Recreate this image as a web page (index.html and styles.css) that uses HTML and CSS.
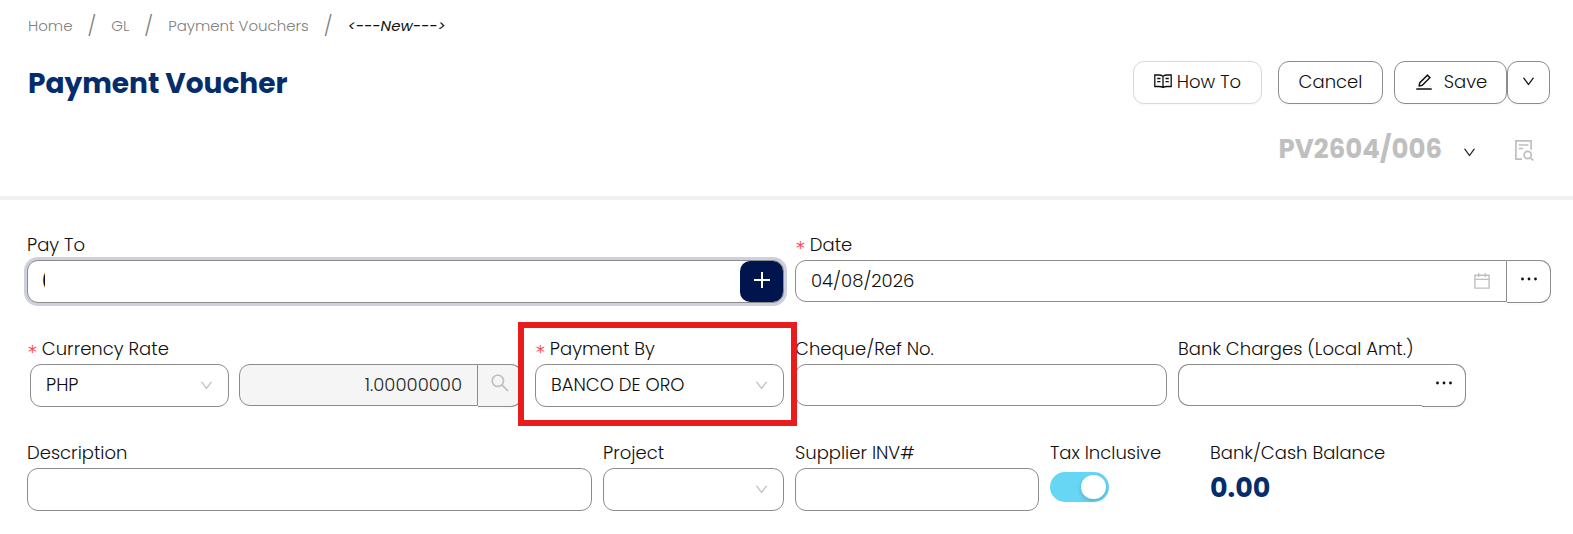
FILE: index.html
```html
<!DOCTYPE html>
<html lang="en">
<head>
<meta charset="utf-8">
<title>Payment Voucher</title>
<meta name="viewport" content="width=device-width, initial-scale=1">
<link rel="stylesheet" href="styles.css">
</head>
<body>
<svg class="sprite" aria-hidden="true">
  <symbol id="down" viewBox="0 0 1024 1024"><path d="M884 256h-75c-5.100 0-9.900 2.500-12.900 6.600L512 654.200 227.900 262.600c-3-4.100-7.800-6.600-12.900-6.600h-75c-6.500 0-10.300 7.400-6.500 12.700l352.600 486.100c12.800 17.600 39 17.600 51.700 0l352.600-486.100c3.900-5.300.1-12.700-6.400-12.700z"/></symbol>
  <symbol id="search" viewBox="0 0 1024 1024"><path d="M909.600 854.500L649.900 594.800C690.200 542.700 712 479 712 412c0-80.200-31.300-155.400-87.900-212.100-56.600-56.700-132-87.900-212.100-87.900s-155.500 31.300-212.100 87.900C143.200 256.500 112 331.800 112 412c0 80.100 31.300 155.500 87.900 212.100C256.500 680.800 331.800 712 412 712c67 0 130.600-21.800 182.700-62l259.700 259.600a8.200 8.200 0 0011.600 0l43.600-43.500a8.200 8.200 0 000-11.600zM570.400 570.400C528 612.700 471.800 636 412 636s-116-23.300-158.400-65.600C211.300 528 188 471.800 188 412s23.300-116.100 65.600-158.400C296 211.300 352.200 188 412 188s116.100 23.200 158.400 65.600S636 352.200 636 412s-23.300 116.100-65.600 158.400z"/></symbol>
  <symbol id="calendar" viewBox="0 0 1024 1024"><path d="M880 184H712v-64c0-4.400-3.600-8-8-8h-56c-4.400 0-8 3.600-8 8v64H384v-64c0-4.400-3.600-8-8-8h-56c-4.400 0-8 3.600-8 8v64H144c-17.700 0-32 14.300-32 32v664c0 17.700 14.300 32 32 32h736c17.700 0 32-14.300 32-32V216c0-17.700-14.300-32-32-32zm-40 656H184V460h656v380zM184 392V256h128v48c0 4.400 3.600 8 8 8h56c4.400 0 8-3.600 8-8v-48h256v48c0 4.400 3.600 8 8 8h56c4.400 0 8-3.600 8-8v-48h128v136H184z"/></symbol>
  <symbol id="edit" viewBox="0 0 1024 1024"><path d="M257.700 752c2 0 4-.2 6-.5L431.900 722c2-.4 3.900-1.300 5.300-2.800l423.900-423.900a9.960 9.960 0 000-14.100L694.900 114.900c-1.900-1.900-4.400-2.900-7.100-2.900s-5.200 1-7.100 2.900L256.800 538.800c-1.500 1.500-2.400 3.300-2.800 5.300l-29.500 168.200a33.500 33.500 0 009.400 29.800c6.600 6.400 14.900 9.900 23.800 9.900zm67.400-174.400L687.800 215l73.300 73.300-362.700 362.600-88.900 15.700 15.600-89zM880 836H144c-17.700 0-32 14.300-32 32v36c0 4.400 3.600 8 8 8h784c4.400 0 8-3.600 8-8v-36c0-17.700-14.300-32-32-32z"/></symbol>
  <symbol id="book" viewBox="0 0 18 18"><g fill="none" stroke="currentColor" stroke-width="1.300"><path d="M9 3.200C7.800 2.400 6.500 2 5 2H.8v11.500H5c1.500 0 2.800.3 4 1 1.200-.7 2.500-1 4-1h4.200V2H13c-1.500 0-2.800.4-4 1.200zM9 3v11.500M3.200 5.500h3.300M3.200 8.700h3.300M11.500 5.500h3.300M11.500 8.700h3.300"/></g></symbol>
  <symbol id="filesearch" viewBox="0 0 20 22"><g fill="none" stroke="currentColor" stroke-width="1.700"><path d="M8 20.200H1.900V1.800h15.200v9M4.600 6h9.800M4.600 9.500h4.600"/><circle cx="13.700" cy="16" r="3.600"/><path d="M16.200 18.600l3 2.700"/></g></symbol>
  <symbol id="dots" viewBox="0 0 18 18"><circle cx="2.500" cy="9" r="1.400"/><circle cx="9" cy="9" r="1.400"/><circle cx="15.500" cy="9" r="1.400"/></symbol>
  <symbol id="plus" viewBox="0 0 18 18"><path d="M8 1h2v7h7v2h-7v7H8v-7H1V8h7z"/></symbol>
</svg>

<header class="page-head">
  <nav class="crumbs" aria-label="Breadcrumb">
    <a href="#">Home</a><span class="sep">/</span><a href="#">GL</a><span class="sep">/</span><a href="#">Payment Vouchers</a><span class="sep">/</span><em>&lt;---New---&gt;</em>
  </nav>
  <div class="title-row">
    <h1>Payment Voucher</h1>
    <div class="actions">
      <button class="btn btn-soft" type="button"><svg class="icon"><use href="#book"/></svg>How To</button>
      <button class="btn btn-cancel" type="button">Cancel</button>
      <div class="split">
        <button class="btn btn-save" type="button"><svg class="icon-lg"><use href="#edit"/></svg>Save</button>
        <button class="btn btn-more" type="button" aria-label="More save options"><svg class="chev"><use href="#down"/></svg></button>
      </div>
    </div>
  </div>
  <div class="number-row">
    <strong>PV2604/006</strong>
    <button class="plain" type="button" aria-label="Voucher numbers"><svg class="chev"><use href="#down"/></svg></button>
    <button class="plain plain-muted" type="button" aria-label="Preview"><svg class="file"><use href="#filesearch"/></svg></button>
  </div>
</header>

<form class="voucher">
  <div class="row row-payee">
    <div class="field">
      <label for="payto">Pay To</label>
      <div class="box focused">
        <input class="clipped" id="payto" type="text" value="(">
        <button class="add" type="button" aria-label="Add payee"><svg class="icon"><use href="#plus"/></svg></button>
      </div>
    </div>
    <div class="field">
      <label class="required" for="date">Date</label>
      <div class="group">
        <div class="box joined">
          <input id="date" type="text" value="04/08/2026">
          <svg class="icon-lg muted"><use href="#calendar"/></svg>
        </div>
        <button class="addon" type="button" aria-label="Date options"><svg class="icon"><use href="#dots"/></svg></button>
      </div>
    </div>
  </div>

  <div class="row row-bank">
    <div class="field">
      <label class="required" for="currency">Currency Rate</label>
      <div class="currency">
        <div class="box">
          <select id="currency"><option>PHP</option></select>
          <svg class="chev muted"><use href="#down"/></svg>
        </div>
        <div class="group">
          <div class="box joined disabled"><input class="amount" type="text" value="1.00000000" aria-label="Rate" disabled></div>
          <button class="addon disabled" type="button" aria-label="Look up rate" disabled><svg class="lens"><use href="#search"/></svg></button>
        </div>
      </div>
    </div>
    <div class="field highlighted">
      <label class="required" for="payby">Payment By</label>
      <div class="box">
        <select id="payby"><option>BANCO DE ORO</option></select>
        <svg class="chev muted"><use href="#down"/></svg>
      </div>
    </div>
    <div class="field">
      <label for="cheque">Cheque/Ref No.</label>
      <div class="box short"><input id="cheque" type="text"></div>
    </div>
    <div class="field">
      <label for="charges">Bank Charges (Local Amt.)</label>
      <div class="group">
        <div class="box joined open"><input id="charges" type="text"></div>
        <button class="addon" type="button" aria-label="Bank charge options"><svg class="icon"><use href="#dots"/></svg></button>
      </div>
    </div>
  </div>

  <div class="row row-detail">
    <div class="field">
      <label for="desc">Description</label>
      <div class="box"><input id="desc" type="text"></div>
    </div>
    <div class="field">
      <label for="project">Project</label>
      <div class="box">
        <select id="project"><option></option></select>
        <svg class="chev muted"><use href="#down"/></svg>
      </div>
    </div>
    <div class="field">
      <label for="inv">Supplier INV#</label>
      <div class="box"><input id="inv" type="text"></div>
    </div>
    <div class="field">
      <label for="tax">Tax Inclusive</label>
      <input class="switch" id="tax" type="checkbox" role="switch" checked>
    </div>
    <div class="field">
      <label for="balance">Bank/Cash Balance</label>
      <output class="balance" id="balance">0.00</output>
    </div>
  </div>
</form>
</body>
</html>
```

FILE: styles.css
```css
* { box-sizing: border-box; }

body {
  margin: 0;
  background: #fff;
  color: #0f0f0f;
  font-family: Poppins, Inter, "Open Sans", sans-serif;
  font-size: 18px;
  font-weight: 300;
  line-height: 26px;
}

button, input, select { font: inherit; color: inherit; }
button { cursor: pointer; }
svg { display: block; flex: none; fill: currentColor; }

.sprite { position: absolute; width: 0; height: 0; }
.icon { width: 18px; height: 18px; }
.icon-lg { width: 20px; height: 20px; }
.chev { width: 15px; height: 15px; }
.lens { width: 22px; height: 22px; }
.file { width: 20px; height: 22px; }
.muted { color: #bfbfbf; }

/* Page header */
.page-head {
  padding: 13px 23px 30px 28px;
  border-bottom: 4px solid #f0f0f0;
}

.crumbs {
  display: flex;
  align-items: center;
  color: #808080;
  font-size: 15px;
}
.crumbs a { color: inherit; text-decoration: none; }
.crumbs em { color: #0f0f0f; font-weight: 400; }
.sep { padding: 0 15px; font-size: 20px; }

.title-row {
  display: flex;
  justify-content: space-between;
  align-items: center;
  padding-top: 22px;
}
h1 {
  margin: 0;
  padding-top: 2px;
  color: #062d6b;
  font-size: 28px;
  font-weight: 700;
  line-height: 40px;
}

.actions { display: flex; }
.btn {
  display: flex;
  align-items: center;
  justify-content: center;
  height: 43px;
  padding: 0 0 2px;
  border: 1px solid #8c8c8c;
  border-radius: 11px;
  background: #fff;
  box-shadow: 0 2px 0 rgba(0, 0, 0, 0.02);
}
.btn-soft { min-width: 129px; margin-right: 16px; gap: 5px; border-color: #d9d9d9; }
.btn-cancel { min-width: 105px; margin-right: 11px; }
.btn-save { min-width: 113px; gap: 10px; }
.btn-more { min-width: 43px; }
.split { display: flex; }

.number-row {
  display: flex;
  justify-content: flex-end;
  align-items: center;
  padding: 28px 16px 0 0;
  color: #bfbfbf;
}
.number-row strong { font-size: 26px; font-weight: 700; line-height: 34px; }
.plain {
  margin-left: 20px;
  padding: 6px 0 0;
  border: 0;
  background: none;
  color: #262626;
}
.plain-muted { margin-left: 37px; padding-top: 2px; color: #bfbfbf; }

/* Form */
.voucher {
  display: grid;
  row-gap: 33px;
  padding: 32px 22px 24px 27px;
}
.row { display: grid; column-gap: 11px; }
.row-payee { grid-template-columns: 757fr 756fr; }
.row-bank { grid-template-columns: 497fr 249fr 372fr 288fr 74fr; }
.row-detail { grid-template-columns: 565fr 181fr 244fr 149fr 341fr; }

.field { position: relative; min-width: 0; }
.field label { display: block; margin-bottom: 2px; white-space: nowrap; }
.required::before {
  content: "\2217";
  margin-right: 4px;
  color: #ff4d4f;
  font-family: "DejaVu Sans Mono", monospace;
  font-size: 18px;
  line-height: 0;
}

.box {
  display: flex;
  align-items: center;
  position: relative;
  flex: 1;
  min-width: 0;
  height: 43px;
  border: 1px solid #8c8c8c;
  border-radius: 11px;
  background: #fff;
}
.box input, .box select {
  flex: 1;
  width: 100%;
  min-width: 0;
  height: 100%;
  padding: 0 15px 2px;
  border: 0;
  outline: 0;
  background: none;
  appearance: none;
}
.box > .muted { position: absolute; right: 14px; pointer-events: none; }
.box .amount { text-align: right; color: #262626; }
.box .clipped { padding-left: 13px; padding-right: calc(100% - 60px); font-weight: 500; }
.short { height: 42px; }

.focused { box-shadow: 0 0 0 3px #cdd0de; }
.add {
  display: grid;
  place-items: center;
  width: 43px;
  height: 41px;
  padding: 0 0 4px;
  border: 0;
  border-radius: 10px;
  background: #00154d;
  color: #fff;
}

.group { display: flex; min-width: 0; }
.joined { height: 42px; border-radius: 11px 0 0 11px; }
.open { border-right: 0; }
.open + .addon { border-left: 0; }
.addon {
  display: grid;
  place-items: center;
  width: 44px;
  height: 43px;
  padding: 0 0 6px;
  border: 1px solid #8c8c8c;
  border-left: 0;
  border-radius: 0 11px 11px 0;
  background: #fff;
  box-shadow: 0 2px 0 rgba(0, 0, 0, 0.02);
}
.disabled { background: #f5f5f5; color: #bfbfbf; }

.currency {
  display: grid;
  grid-template-columns: 199fr 283fr;
  column-gap: 10px;
  padding: 0 2px 0 3px;
}

/* Callout frame drawn over the neighbouring fields */
.highlighted { z-index: 1; }
.highlighted::after {
  content: "";
  position: absolute;
  inset: -14px -13px -19px -17px;
  border: 6px solid #e81c1c;
  pointer-events: none;
}

.switch {
  display: block;
  width: 59px;
  height: 30px;
  margin: 6px 0 0;
  padding: 3px;
  border-radius: 15px;
  background: #bfbfbf;
  appearance: none;
}
.switch::before {
  content: "";
  display: block;
  width: 25px;
  height: 24px;
  border-radius: 12px;
  background: #fff;
  box-shadow: 0 2px 4px rgba(0, 35, 11, 0.2);
}
.switch:checked { background: #66d6f4; }
.switch:checked::before { margin-left: auto; }

.balance {
  display: block;
  color: #062d6b;
  font-size: 27px;
  font-weight: 700;
  line-height: 40px;
}
```
